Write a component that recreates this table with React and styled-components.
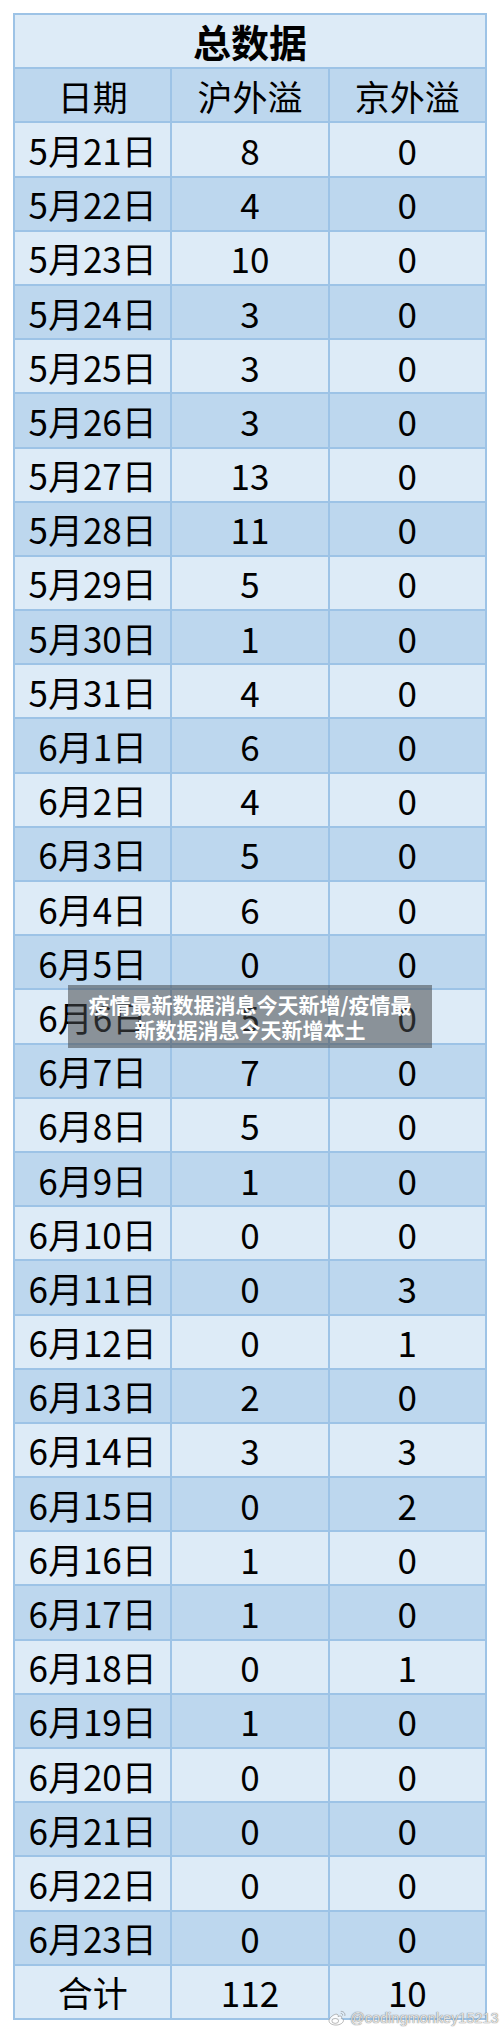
import styled, { createGlobalStyle } from "styled-components";

const GlobalStyle = createGlobalStyle`
  html, body {
    margin: 0;
    padding: 0;
    background: #ffffff;
  }
  body {
    font-family: "Noto Sans CJK SC", "Noto Sans", sans-serif;
  }
`;

const rows = [
  ["5月21日", 8, 0],
  ["5月22日", 4, 0],
  ["5月23日", 10, 0],
  ["5月24日", 3, 0],
  ["5月25日", 3, 0],
  ["5月26日", 3, 0],
  ["5月27日", 13, 0],
  ["5月28日", 11, 0],
  ["5月29日", 5, 0],
  ["5月30日", 1, 0],
  ["5月31日", 4, 0],
  ["6月1日", 6, 0],
  ["6月2日", 4, 0],
  ["6月3日", 5, 0],
  ["6月4日", 6, 0],
  ["6月5日", 0, 0],
  ["6月6日", 5, 0],
  ["6月7日", 7, 0],
  ["6月8日", 5, 0],
  ["6月9日", 1, 0],
  ["6月10日", 0, 0],
  ["6月11日", 0, 3],
  ["6月12日", 0, 1],
  ["6月13日", 2, 0],
  ["6月14日", 3, 3],
  ["6月15日", 0, 2],
  ["6月16日", 1, 0],
  ["6月17日", 1, 0],
  ["6月18日", 0, 1],
  ["6月19日", 1, 0],
  ["6月20日", 0, 0],
  ["6月21日", 0, 0],
  ["6月22日", 0, 0],
  ["6月23日", 0, 0],
];

export default function App() {
  return (
    <>
      <GlobalStyle />
      <Page>
        <Table>
          <Title>总数据</Title>
          <Cell $dark>日期</Cell>
          <Cell $dark>沪外溢</Cell>
          <Cell $dark>京外溢</Cell>
          {rows.map(([date, hu, jing], i) => (
            <Row key={date}>
              <Cell $dark={i % 2 === 1}>{date}</Cell>
              <Cell $dark={i % 2 === 1}>{hu}</Cell>
              <Cell $dark={i % 2 === 1}>{jing}</Cell>
            </Row>
          ))}
          <Cell>合计</Cell>
          <Cell>112</Cell>
          <Cell>10</Cell>
        </Table>
        <Caption>疫情最新数据消息今天新增/疫情最新数据消息今天新增本土</Caption>
        <Watermark>
          <WeiboIcon />
          <span>@codingmonkey15213</span>
        </Watermark>
      </Page>
    </>
  );
}

const WeiboIcon = () => (
  <svg width="19" height="16" viewBox="0 0 20 17">
    <g fill="rgba(255,255,255,0.85)" stroke="rgba(120,120,120,0.55)" strokeWidth="1">
      <path d="M8 4.5c-3.5 1-7 4.3-7 7 0 2.6 3.4 4.5 7.3 4.5 4.6 0 8-2.5 8-4.8 0-1.4-1.2-2-2.2-2.3.8-1.4.4-2.8-1.8-2.4-.9.2-1.6.6-1.6.6.3-1.4-.3-3.2-2.7-2.6z" />
      <ellipse cx="7.6" cy="11.6" rx="3.6" ry="2.6" />
      <path d="M13.5 1.5c2.8-.3 5 2 4.3 4.8" fill="none" />
      <path d="M13.4 3.6c1.3-.1 2.4 1 2 2.3" fill="none" />
    </g>
  </svg>
);

const Page = styled.div`
  position: relative;
  width: 500px;
  height: 2034px;
  padding: 13px 13px 0 13px;
  box-sizing: border-box;
  overflow: hidden;
`;

const Table = styled.div`
  display: grid;
  grid-template-columns: 1fr 1fr 1fr;
  grid-auto-rows: 52.2px;
  gap: 2px;
  padding: 2px;
  background: #9dc3e6;
  width: 474px;
  box-sizing: border-box;
`;

const Row = styled.div`
  display: contents;
`;

const Cell = styled.div`
  display: flex;
  align-items: center;
  justify-content: center;
  background: ${(p) => (p.$dark ? "#bdd7ee" : "#ddebf7")};
  color: #000000;
  font-size: 35px;
  line-height: 1;
  white-space: nowrap;
`;

const Title = styled(Cell)`
  grid-column: 1 / span 3;
  font-size: 38px;
  font-weight: 700;
`;

const Caption = styled.div`
  position: absolute;
  left: 68px;
  top: 985px;
  width: 364px;
  height: 63px;
  box-sizing: border-box;
  padding: 4px 10px;
  display: flex;
  align-items: center;
  justify-content: center;
  text-align: center;
  background: rgba(70, 72, 76, 0.55);
  color: #ffffff;
  font-size: 21px;
  font-weight: 700;
  line-height: 25px;
`;

const Watermark = styled.div`
  position: absolute;
  left: 328px;
  top: 2010px;
  display: flex;
  align-items: center;
  gap: 3px;
  font-family: "Liberation Sans", "Noto Sans", sans-serif;
  font-size: 14.5px;
  color: rgba(255, 255, 255, 0.8);
  text-shadow: 0 0 1px rgba(90, 90, 90, 0.7), 0 0 1px rgba(90, 90, 90, 0.7);
  white-space: nowrap;
`;
